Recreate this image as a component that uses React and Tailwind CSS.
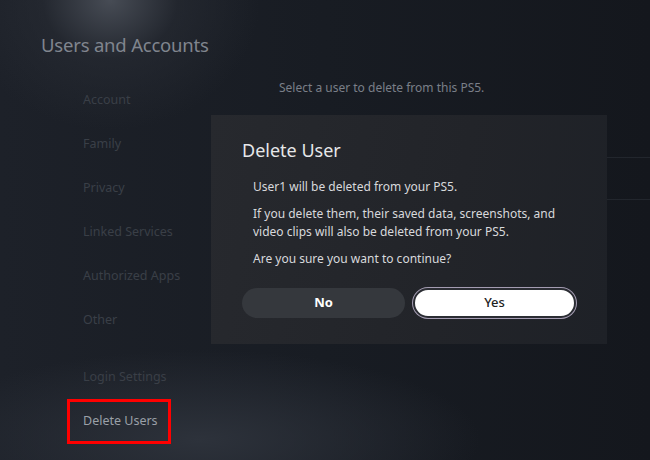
const menu = [
  { label: "Account" },
  { label: "Family" },
  { label: "Privacy" },
  { label: "Linked Services" },
  { label: "Authorized Apps" },
  { label: "Other" },
];

function MenuItem({ label, active }) {
  return (
    <div className="h-[44px] flex items-center">
      <span className={active ? "text-[#9aa0a8]" : "text-[#3a3f47]"}>{label}</span>
    </div>
  );
}

export default function App() {
  return (
    <div
      className="relative w-[650px] h-[460px] overflow-hidden text-[12px] bg-[#161a21] bg-[radial-gradient(ellipse_150px_130px_at_110px_0px,#474c55_0%,rgba(40,44,52,0.6)_45%,transparent_100%),radial-gradient(ellipse_280px_90px_at_200px_440px,#2d323b_0%,transparent_100%),linear-gradient(90deg,#1d2129_0%,#181c23_50%,#14171d_100%)]"
      style={{ fontFamily: '"Noto Sans", "Open Sans", sans-serif' }}
    >
      <div className="flex h-full">
        {/* sidebar */}
        <div className="w-[230px] shrink-0 pl-[41px] pt-[30px]">
          <h1 className="text-[18.5px] leading-[30px] text-[#80858e] tracking-[-0.2px]">
            Users and Accounts
          </h1>
          <div className="pl-[42px] pt-[18px] text-[12.5px]">
            {menu.map((m) => (
              <MenuItem key={m.label} label={m.label} />
            ))}
            <div className="h-[13px]" />
            <MenuItem label="Login Settings" />
            <div className="relative">
              <MenuItem label="Delete Users" active />
              <div className="absolute left-[-16px] top-[0px] w-[104px] h-[45px] border-[3px] border-[#ff0000]" />
            </div>
          </div>
        </div>

        {/* main panel */}
        <div className="flex-1 pt-[79px]">
          <p className="pl-[49px] text-[#7a7f88]">
            Select a user to delete from this PS5.
          </p>
          <div className="mt-[60px] h-[43px] border-y border-[#22262d]" />
        </div>
      </div>

      {/* dialog */}
      <div className="absolute left-[211px] top-[115px] w-[396px] h-[229px] bg-[linear-gradient(100deg,#27292e_0%,#222429_60%,#1e2127_100%)] pl-[31px] pr-[29px] pt-[22px]">
        <h2 className="text-[18px] leading-[26px] text-[#e6e7e9]">Delete User</h2>
        <div className="pl-[11px] pt-[15px] text-[#d8d9dc] leading-[18px] flex flex-col gap-[9px] whitespace-nowrap">
          <p>User1 will be deleted from your PS5.</p>
          <p>
            If you delete them, their saved data, screenshots, and
            <br />
            video clips will also be deleted from your PS5.
          </p>
          <p>Are you sure you want to continue?</p>
        </div>
        <div className="flex gap-[8px] mt-[20px] w-[336px]">
          <button className="w-[163px] h-[30px] rounded-full bg-[#35383d] text-white font-bold text-[13px]">
            No
          </button>
          <button className="w-[163px] h-[30px] rounded-full bg-white text-[#222] font-medium text-[13px] border-[2px] border-[#2b2d33] ring-1 ring-[#a49cb2]">
            Yes
          </button>
        </div>
      </div>
    </div>
  );
}
